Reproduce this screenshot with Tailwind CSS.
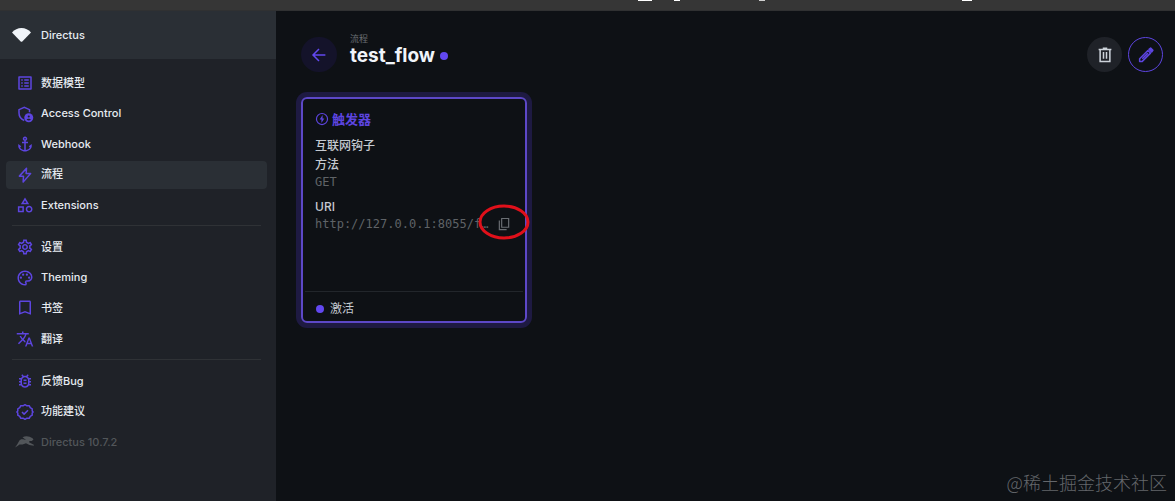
<!DOCTYPE html>
<html lang="zh-CN">
<head>
  <meta charset="UTF-8" />
  <title>test_flow · Directus</title>
  <meta name="viewport" content="width=device-width, initial-scale=1.0" />
  <script src="https://cdn.jsdelivr.net/npm/@tailwindcss/browser@4"></script>
</head>
<body class="min-h-screen flex flex-col bg-[#0e1115] text-[#e6ebf1] font-['Inter','Noto_Sans_CJK_SC',sans-serif]">

  <!-- browser toolbar edge -->
  <div class="relative h-[11px] bg-[#363636] border-b border-[#303132]">
    <span class="absolute top-0 left-[54.3%] w-3.5 h-px bg-white"></span>
    <span class="absolute top-0 left-[57.4%] w-1.5 h-px bg-white"></span>
    <span class="absolute top-0 left-[64.6%] w-1.5 h-px bg-[#d0d0d0]"></span>
    <span class="absolute top-0 left-[81.9%] w-2.5 h-px bg-white"></span>
  </div>

  <div class="flex flex-grow">
    <aside class="w-[276px] shrink-0 bg-[#1f2228]">
      <a href="#" class="flex items-center h-12 pl-3 gap-[10px] bg-[#2a2f35] text-[11px] font-medium">
        <svg class="w-[19px] h-[14px]" viewBox="0 0 19 14" fill="#f0f4f9"><path d="M0 4.600C2.500 1.500 5.800 0 9.500 0S16.500 1.500 19 4.600L10.300 13.400Q9.500 14.200 8.700 13.400z"/></svg>
        Directus
      </a>

      <nav class="pt-[10px] pl-1.5 pr-[9px] text-[11px] font-medium">
        <div class="flex flex-col justify-between h-[150px]">
          <a href="#" class="flex items-center h-7 px-[10px] gap-[7px]">
            <svg class="w-[18px] h-[18px] fill-[#5d45e0]" viewBox="0 0 24 24"><path d="M19 5v14H5V5h14m1.100-2H3.900c-.5 0-.9.4-.9.9v16.200c0 .4.4.9.9.9h16.200c.4 0 .9-.5.9-.9V3.900c0-.5-.5-.9-.9-.9zM11 7h6v2h-6V7zm0 4h6v2h-6v-2zm0 4h6v2h-6zM7 7h2v2H7zm0 4h2v2H7zm0 4h2v2H7z"/></svg>
            数据模型
          </a>
          <a href="#" class="flex items-center h-7 px-[10px] gap-[7px]">
            <svg class="w-[18px] h-[18px]" viewBox="0 0 24 24" fill="none" stroke="#5d45e0" stroke-width="2"><path d="M18 9.500V6.200L11 3 4 6.200v4.600c0 4.800 2.900 8.300 7 9.900"/><circle cx="17" cy="17" r="6" fill="#5d45e0" stroke="none"/><circle cx="17" cy="15.400" r="1.400" fill="#1f2228" stroke="none"/><path d="M14.200 19.300c.6-1.300 5-1.300 5.600 0-1.300 1.600-4.300 1.600-5.600 0z" fill="#1f2228" stroke="none"/></svg>
            Access Control
          </a>
          <a href="#" class="flex items-center h-7 px-[10px] gap-[7px]">
            <svg class="w-[18px] h-[18px] fill-[#5d45e0]" viewBox="0 0 24 24"><path d="M13 9V7.820C14.160 7.400 15 6.300 15 5c0-1.650-1.350-3-3-3S9 3.350 9 5c0 1.300.84 2.400 2 2.820V9H8v2h3v8.920c-2.220-.33-4.590-1.680-5.550-3.370L7 15l-4-3v3c0 3.880 4.920 7 9 7s9-3.120 9-7v-3l-4 3 1.550 1.550c-.96 1.690-3.330 3.040-5.550 3.370V11h3V9h-3zm-1-5c.55 0 1 .45 1 1s-.45 1-1 1-1-.45-1-1 .45-1 1-1z"/></svg>
            Webhook
          </a>
          <a href="#" class="flex items-center h-7 px-[10px] gap-[7px] rounded bg-[#2a2f35]">
            <svg class="w-[18px] h-[18px]" viewBox="0 0 24 24" fill="none" stroke="#5d45e0" stroke-width="2" stroke-linejoin="round"><path d="M14 3 4.500 13.500H10L9.500 21.500 19.500 10h-6z"/></svg>
            流程
          </a>
          <a href="#" class="flex items-center h-7 px-[10px] gap-[7px]">
            <svg class="w-[18px] h-[18px] fill-[#5d45e0]" viewBox="0 0 24 24"><path d="M12 2l-5.500 9h11L12 2zm0 3.840L13.930 9h-3.870L12 5.840zM17.500 13c-2.490 0-4.500 2.010-4.500 4.500s2.010 4.500 4.500 4.500 4.500-2.010 4.500-4.500-2.010-4.500-4.500-4.500zm0 7c-1.380 0-2.500-1.120-2.500-2.500s1.120-2.500 2.500-2.500 2.500 1.120 2.500 2.500-1.120 2.500-2.500 2.500zM2.500 21.500h8v-8h-8v8zm2-6h4v4h-4v-4z"/></svg>
            Extensions
          </a>
        </div>

        <hr class="mt-1.5 mb-[7px] mx-1.5 border-[#2f3236]" />

        <div class="flex flex-col justify-between h-[120px]">
          <a href="#" class="flex items-center h-7 px-[10px] gap-[7px]">
            <svg class="w-[18px] h-[18px] fill-[#5d45e0]" viewBox="0 0 24 24"><path d="M19.430 12.980c.04-.32.07-.64.07-.98 0-.34-.03-.66-.07-.98l2.110-1.650c.19-.15.24-.42.12-.64l-2-3.460c-.09-.16-.26-.25-.44-.25-.06 0-.12.01-.17.03l-2.490 1c-.52-.4-1.080-.73-1.690-.98l-.38-2.650C14.460 2.180 14.250 2 14 2h-4c-.25 0-.46.18-.49.42l-.38 2.650c-.61.25-1.170.59-1.690.98l-2.490-1c-.06-.02-.12-.03-.18-.03-.17 0-.34.09-.43.25l-2 3.460c-.13.22-.07.49.12.64l2.110 1.650c-.04.32-.07.65-.07.98 0 .33.03.66.07.98l-2.110 1.650c-.19.15-.24.42-.12.64l2 3.460c.09.16.26.25.44.25.06 0 .12-.01.17-.03l2.490-1c.52.4 1.080.73 1.690.98l.38 2.650c.03.24.24.42.49.42h4c.25 0 .46-.18.49-.42l.38-2.650c.61-.25 1.170-.59 1.690-.98l2.490 1c.06.02.12.03.18.03.17 0 .34-.09.43-.25l2-3.460c.12-.22.07-.49-.12-.64l-2.110-1.650zm-1.980-1.710c.04.31.05.52.05.73 0 .21-.02.43-.05.73l-.14 1.130.89.7 1.080.84-.7 1.210-1.270-.51-1.040-.42-.9.68c-.43.32-.84.56-1.250.73l-1.060.43-.16 1.130-.2 1.350h-1.400l-.19-1.350-.16-1.130-1.060-.43c-.43-.18-.83-.41-1.230-.71l-.91-.7-1.060.43-1.270.51-.7-1.210 1.080-.84.89-.7-.14-1.130c-.03-.31-.05-.54-.05-.74s.02-.43.05-.73l.14-1.130-.89-.7-1.080-.84.7-1.210 1.270.51 1.040.42.9-.68c.43-.32.84-.56 1.250-.73l1.060-.43.16-1.130.2-1.350h1.390l.19 1.350.16 1.130 1.060.43c.43.18.83.41 1.230.71l.91.7 1.060-.43 1.270-.51.7 1.210-1.070.85-.89.7.14 1.130zM12 8c-2.210 0-4 1.790-4 4s1.790 4 4 4 4-1.790 4-4-1.790-4-4-4zm0 6c-1.100 0-2-.9-2-2s.9-2 2-2 2 .9 2 2-.9 2-2 2z"/></svg>
            设置
          </a>
          <a href="#" class="flex items-center h-7 px-[10px] gap-[7px]">
            <svg class="w-[18px] h-[18px] fill-[#5d45e0]" viewBox="0 0 24 24"><path d="M12 22C6.490 22 2 17.510 2 12S6.490 2 12 2s10 4.040 10 9c0 3.310-2.690 6-6 6h-1.770c-.28 0-.5.22-.5.5 0 .12.05.23.13.33.41.47.64 1.060.64 1.670A2.500 2.500 0 0 1 12 22zm0-18c-4.410 0-8 3.590-8 8s3.590 8 8 8c.28 0 .5-.22.5-.5a.54.54 0 0 0-.14-.35c-.41-.46-.63-1.050-.63-1.650a2.500 2.500 0 0 1 2.500-2.500H16c2.210 0 4-1.790 4-4 0-3.860-3.590-7-8-7z"/><circle cx="6.500" cy="11.500" r="1.500"/><circle cx="9.500" cy="7.500" r="1.500"/><circle cx="14.500" cy="7.500" r="1.500"/><circle cx="17.500" cy="11.500" r="1.500"/></svg>
            Theming
          </a>
          <a href="#" class="flex items-center h-7 px-[10px] gap-[7px]">
            <svg class="w-[18px] h-[18px] fill-[#5d45e0]" viewBox="0 0 24 24"><path d="M18 2H6c-1.100 0-2 .9-2 2v17l8-3 8 3V4c0-1.100-.9-2-2-2zm0 16.200l-6-2.300-6 2.300V4h12v14.200z"/></svg>
            书签
          </a>
          <a href="#" class="flex items-center h-7 px-[10px] gap-[7px]">
            <svg class="w-[18px] h-[18px] fill-[#5d45e0]" viewBox="0 0 24 24"><path d="M12.870 15.070l-2.540-2.510.03-.03c1.740-1.940 2.980-4.170 3.710-6.530H17V4h-7V2H8v2H1v1.990h11.170C11.500 7.920 10.440 9.750 9 11.350 8.070 10.320 7.300 9.190 6.690 8h-2c.73 1.630 1.730 3.170 2.980 4.560l-5.090 5.020L4 19l5-5 3.110 3.110.76-2.040zM18.500 10h-2L12 22h2l1.120-3h4.750L21 22h2l-4.500-12zm-2.620 7l1.620-4.330L19.120 17h-3.240z"/></svg>
            翻译
          </a>
        </div>

        <hr class="mt-1.5 mb-[7px] mx-1.5 border-[#2f3236]" />

        <div class="flex flex-col justify-between h-[89px]">
          <a href="#" class="flex items-center h-7 px-[10px] gap-[7px]">
            <svg class="w-[18px] h-[18px] fill-[#5d45e0]" viewBox="0 0 24 24"><path d="M20 8h-2.810c-.45-.78-1.070-1.450-1.820-1.960L17 4.410 15.590 3l-2.170 2.170C12.960 5.060 12.490 5 12 5s-.96.06-1.410.17L8.410 3 7 4.410l1.620 1.630C7.880 6.550 7.260 7.220 6.810 8H4v2h2.090c-.05.33-.09.66-.09 1v1H4v2h2v1c0 .34.04.67.09 1H4v2h2.810c1.040 1.790 2.970 3 5.190 3s4.150-1.210 5.190-3H20v-2h-2.090c.05-.33.09-.66.09-1v-1h2v-2h-2v-1c0-.34-.04-.67-.09-1H20V8zm-4 4v3c0 2.210-1.790 4-4 4s-4-1.790-4-4v-4c0-2.210 1.790-4 4-4s4 1.790 4 4v1zm-6 2h4v2h-4v-2zm0-4h4v2h-4v-2z"/></svg>
            反馈Bug
          </a>
          <a href="#" class="flex items-center h-7 px-[10px] gap-[7px]">
            <svg class="w-[18px] h-[18px]" viewBox="0 0 24 24" fill="none" stroke="#5d45e0" stroke-width="2" stroke-linejoin="round"><path d="M12 2.200l2.600 1.500 3-.1 1.400 2.600 2.600 1.500v3l1.200 1.300-1.200 1.300v3L19 17.800l-1.400 2.600-3-.1-2.600 1.500-2.600-1.500-3 .1L5 17.800l-2.600-1.500v-3L1.200 12l1.200-1.300v-3L5 6.200l1.400-2.600 3 .1z"/><path d="M8 12l2.800 2.800L16 9.700"/></svg>
            功能建议
          </a>
          <a href="#" class="flex items-center h-7 px-[10px] gap-[7px] text-[#52565a]">
            <svg class="w-[18px] h-[18px] overflow-visible fill-[#52565a]" viewBox="0 0 18 18"><path d="M-1 14.500C1 12 1.800 10.500 3 8.200 4 6.300 5.800 6 8 6.500L10 7 6.500 4.300C9.500 2.500 13.500 3 16.500 5.200L17.500 6.400 15.800 8H13.500L13 9.300 17.800 11.800V12.800L13.500 12 10 10.300 6.500 11.500H3.500L1.500 13z"/></svg>
            Directus 10.7.2
          </a>
        </div>
      </nav>
    </aside>

    <main class="relative flex-grow pt-[26px] pr-3 pl-[25px]">
      <header class="flex items-center h-[35px]">
        <button aria-label="返回" class="flex items-center justify-center w-9 h-[35px] rounded-full bg-[#14132a]">
          <svg class="w-[18px] h-[18px]" viewBox="0 0 24 24" fill="none" stroke="#6248f0" stroke-width="2"><path d="M20.500 12H5M12 4l-8 8 8 8"/></svg>
        </button>
        <div class="ml-[13px] mb-2.5 flex flex-col">
          <a href="#" class="text-[9px] leading-[12px] text-[#6a6e73]">流程</a>
          <div class="flex items-center gap-[5px]">
            <h1 class="text-[19px] leading-[22px] font-bold text-[#f0f4f9]">test_flow</h1>
            <span class="w-2 h-2 rounded-full bg-[#6248f0]"></span>
          </div>
        </div>
        <div class="ml-auto flex gap-1.5">
          <button aria-label="删除" class="flex items-center justify-center w-[35px] h-[35px] rounded-full bg-[#1f2228]">
            <svg class="w-[18px] h-[18px]" viewBox="0 0 24 24" fill="none" stroke="#cdd3da" stroke-width="2"><path d="M3.500 4.500h17M9 3h6M5.500 4.500V20.500h13V4.500M10 8v9M14 8v9"/></svg>
          </button>
          <button aria-label="编辑" class="flex items-center justify-center w-[35px] h-[35px] rounded-full border border-[#5d45e0]">
            <svg class="w-[18px] h-[18px]" viewBox="0 0 24 24" fill="none" stroke="#5d45e0" stroke-width="2" stroke-linejoin="round"><path d="M3.500 17L14.500 6l3.500 3.500-11 11H3.500zM7 17l7.500-7.500"/><path d="M16 4.500L18.200 2.800l3 3L19.500 8z" fill="#5d45e0"/></svg>
          </button>
        </div>
      </header>

      <section class="mt-[25px] w-[226px] h-[226px] flex flex-col rounded-md border-2 border-[#5d48c8] ring-5 ring-[#1e1a42]">
        <div class="flex-grow pt-[11px] px-3 text-[12px] font-medium text-[#c5cad1]">
          <h2 class="flex items-center gap-[3px] text-[13px] leading-[18px] font-bold text-[#5d45e0]">
            <svg class="w-3.5 h-3.5" viewBox="0 0 24 24" fill="none" stroke="#5d45e0" stroke-width="2"><circle cx="12" cy="12" r="9.500"/><path d="M13 5l-5 8h3v6l5-8h-3z" fill="#5d45e0" stroke="none"/></svg>
            触发器
          </h2>
          <p class="mt-[9px] leading-[18px]">互联网钩子</p>
          <dl>
            <dt class="leading-5">方法</dt>
            <dd class="font-['DejaVu_Sans_Mono',monospace] font-normal leading-[14px] text-[#5f6367]">GET</dd>
            <dt class="mt-2 leading-5">URI</dt>
            <dd class="relative flex items-center font-['DejaVu_Sans_Mono',monospace] font-normal leading-[14px] text-[#5f6367]">
              <span class="w-[175px] truncate">http://127.0.0.1:8055/f…</span>
              <button aria-label="复制" class="ml-[7px]">
                <svg class="w-3.5 h-3.5" viewBox="0 0 24 24" fill="none" stroke="#6a6e73" stroke-width="2"><path d="M8 2.500h12v15H8zM4 6v15.500h12.500"/></svg>
              </button>
              <!-- hand-drawn highlight round the copy button -->
              <svg class="absolute -top-[13px] left-[163px] w-[52px] h-9 max-w-none" viewBox="0 0 52 36" fill="none" stroke="#e0101a" stroke-width="3"><ellipse cx="26" cy="18" rx="24" ry="16"/></svg>
            </dd>
          </dl>
        </div>
        <footer class="flex items-center gap-1.5 h-[30px] pt-1 mx-0.5 px-[11px] border-t border-[#22262b] text-[12px] text-[#c5cad1]">
          <span class="w-2 h-2 rounded-full bg-[#6248f0]"></span>
          激活
        </footer>
      </section>

      <div class="absolute right-2 bottom-[7px] font-['Noto_Sans_CJK_SC',sans-serif] font-light text-[18px] leading-6 text-[#64676b]">@稀土掘金技术社区</div>
    </main>
  </div>

</body>
</html>
